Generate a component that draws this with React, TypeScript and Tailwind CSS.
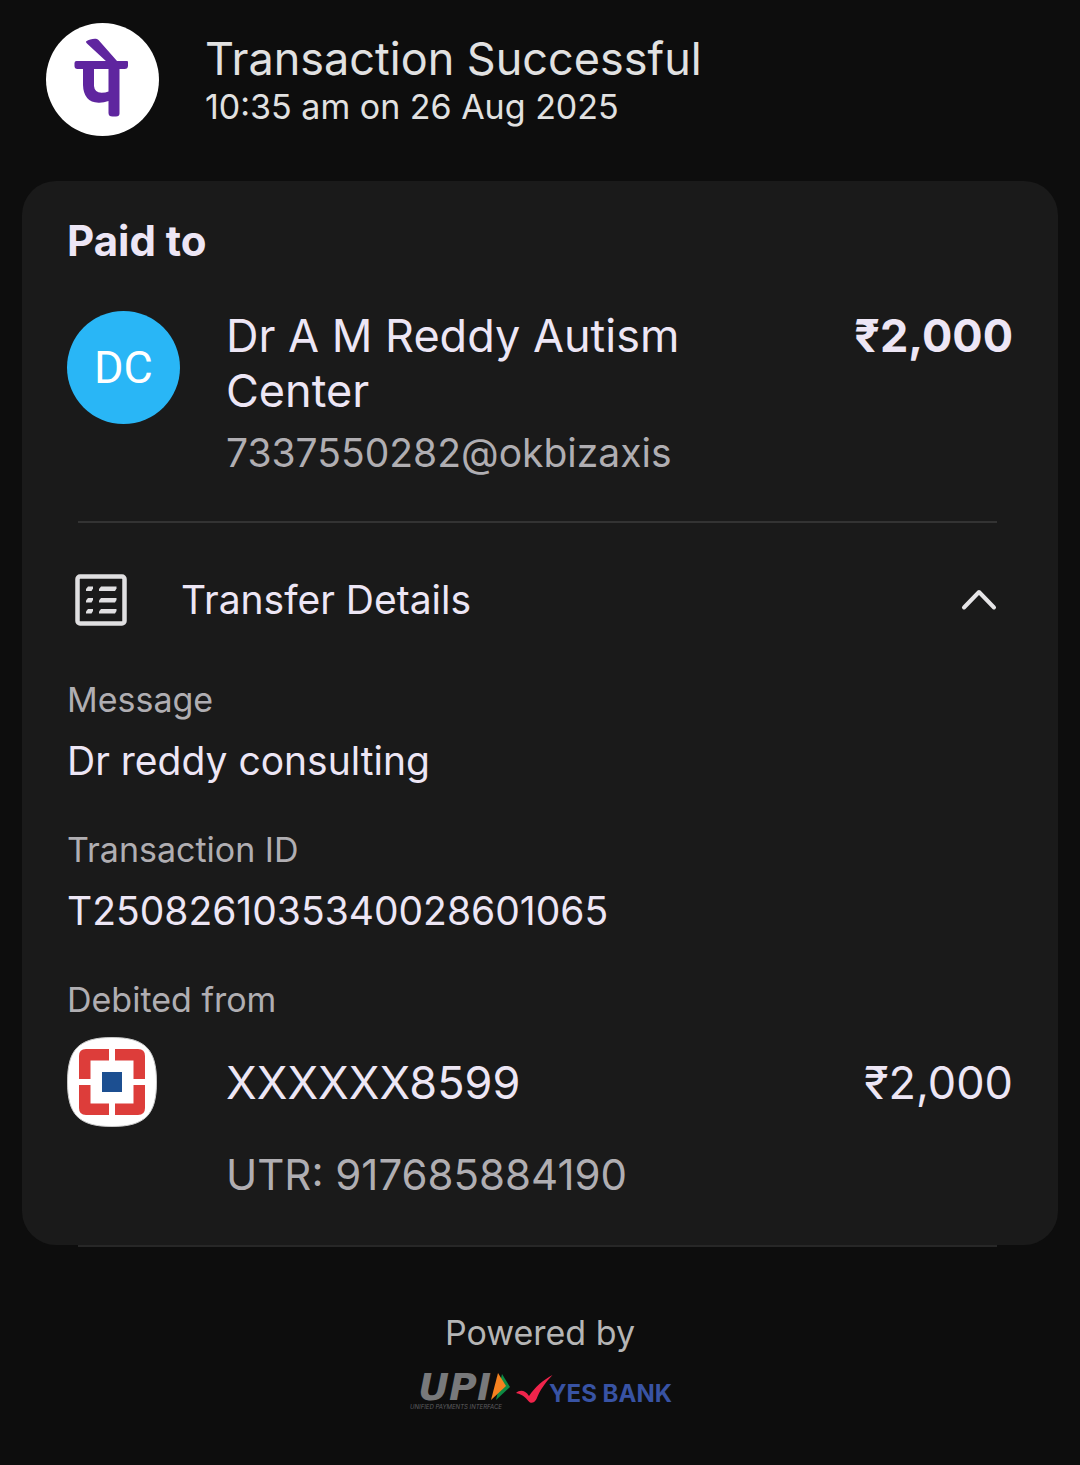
import { useState } from "react";

function PhonePeLogo() {
  return (
    <svg viewBox="0 0 113 113" className="size-[113px] shrink-0" role="img" aria-label="PhonePe">
      <circle cx="56.5" cy="56.5" r="56.5" fill="#ffffff" />
      <g fill="#5f259f">
        <path d="M40 18.5 C43 16.3 47 15.5 50 15.8 Q51.600 16 52.500 17 L71 38 L61.500 39.500 L41.500 21 Q39.800 19.600 40 18.500 Z" />
        <path d="M30.500 38 H81 Q82 38 82 39 V42.500 Q82 46 78.500 46 H73.500 V90.500 Q73.500 93.500 70 93.500 H66.500 Q62.500 93.500 62.500 90 V78 Q57.500 80 52.500 79.800 Q37.500 79 37 62 V46 H31.500 Q28.500 46 28.500 43 V40 Q28.500 38 30.500 38 Z M48 46 V63 Q48.500 69.500 55.500 69.800 Q59.500 69.800 62.500 68.500 V46 Z" fillRule="evenodd" />
      </g>
    </svg>
  );
}

function DetailsIcon() {
  return (
    <svg viewBox="0 0 52 52" className="size-[52px] shrink-0" aria-hidden="true">
      <rect x="2.500" y="2.500" width="47" height="47" rx="2.500" fill="none" stroke="#e0dfe1" strokeWidth="4.500" />
      <g fill="#e0dfe1">
        {[12.5, 24, 35].map((y) => (
          <g key={y} transform={`translate(0 ${y})`}>
            <path d="M13 0 H18 V2 L16.500 4.500 H11 V2.500 Z" />
            <path d="M26 0 H41.500 V2 L40 4.500 H24 V2.500 Z" />
          </g>
        ))}
      </g>
    </svg>
  );
}

function BankLogo() {
  return (
    <svg viewBox="0 0 90 90" className="size-[90px] shrink-0" role="img" aria-label="HDFC Bank">
      <path
        d="M45 0.500 C78 0.500 89.500 12 89.500 45 C89.500 78 78 89.500 45 89.500 C12 89.500 0.500 78 0.500 45 C0.500 12 12 0.500 45 0.500 Z"
        fill="#ffffff"
        stroke="#c9c9c9"
        strokeWidth="1"
      />
      <g fill="#dd3d3a">
        <path d="M42 12 H19 Q12 12 12 19 V42 H23.500 V23.500 H42 Z" />
        <path d="M48 12 H71 Q78 12 78 19 V42 H66.500 V23.500 H48 Z" />
        <path d="M42 78 H19 Q12 78 12 71 V48 H23.500 V66.500 H42 Z" />
        <path d="M48 78 H71 Q78 78 78 71 V48 H66.500 V66.500 H48 Z" />
      </g>
      <rect x="35" y="35" width="20" height="20" fill="#1c4f91" />
    </svg>
  );
}

function UpiLogo() {
  return (
    <div className="w-[102px]">
      <div className="flex h-7 items-center justify-end">
        <span className="font-['DejaVu_Sans',sans-serif] text-[38px] leading-7 font-bold text-[#78797b] italic">UPI</span>
        <svg viewBox="0 0 19 28" className="h-7 w-[19px] shrink-0" aria-hidden="true">
          <path d="M11 1 L19 14 L5 27 Z" fill="#0e8a43" />
          <path d="M7 0 L15 13 L0 27 Z" fill="#f58220" />
        </svg>
      </div>
      <p className="pl-0.5 text-[6px] leading-3 whitespace-nowrap text-[#5d5e60] italic">UNIFIED PAYMENTS INTERFACE</p>
    </div>
  );
}

function YesBankLogo() {
  return (
    <div className="flex items-start">
      <svg viewBox="0 0 37 32" className="h-8 w-[37px] shrink-0" aria-hidden="true">
        <path
          d="M0 20 C4 16.500 9 17 13 23 C19 14 27 7 36.500 2 C29 10 24 17 20.500 26 Q17.500 31 14 29.500 C10 26 8 21.500 0 20 Z"
          fill="#f0244b"
        />
      </svg>
      <span className="-ml-1 pt-[7px] text-[24px] leading-7 font-bold text-[#3853a4]">YES BANK</span>
    </div>
  );
}

function Field({ label, value }: { label: string; value: string }) {
  return (
    <div className="mb-[42px]">
      <dt className="text-[34px] leading-[44px] text-[#b0aeb2]">{label}</dt>
      <dd className="mt-3.5 break-words text-[39px] leading-[50px]">{value}</dd>
    </div>
  );
}

export default function App() {
  const [open, setOpen] = useState(true);

  return (
    <div className="min-h-screen bg-[#0d0d0d] px-[22px] pt-[23px] pb-14 font-['Inter',sans-serif] text-[#ede6f5]">
      <header className="flex items-center gap-[46px] pl-6 text-[#e1e1e1]">
        <PhonePeLogo />
        <div className="pt-0.5">
          <h1 className="text-[45px] leading-[52px]">Transaction Successful</h1>
          <p className="text-[34px] leading-[44px]">10:35 am on 26 Aug 2025</p>
        </div>
      </header>

      <main className="mt-[45px] rounded-[34px] bg-[#1a1a1a] px-[45px] pt-[35px] pb-[45px]">
        <h2 className="text-[42px] leading-[50px] font-bold">Paid to</h2>

        <section className="mt-[42px] flex items-start gap-[46px]">
          <div className="mt-[3px] flex size-[113px] shrink-0 items-center justify-center rounded-full bg-[#29b6f6] font-['Roboto',sans-serif] text-[45px] text-white">
            DC
          </div>
          <div className="min-w-0 flex-1">
            <p className="text-[45px] leading-[55px]">Dr A M Reddy Autism Center</p>
            <p className="mt-2.5 text-[39px] leading-[50px] text-[#b0aeb2]">7337550282@okbizaxis</p>
          </div>
          <p className="text-[45px] leading-[55px] font-bold">₹2,000</p>
        </section>

        <hr className="mt-[43px] mr-4 ml-[11px] border-t-2 border-[#333333]" />

        <button
          type="button"
          aria-expanded={open}
          onClick={() => setOpen(!open)}
          className="mt-[51px] flex w-full items-center pr-4 pl-2 text-left"
        >
          <DetailsIcon />
          <span className="ml-[54px] flex-1 text-[39px] leading-[50px]">Transfer Details</span>
          <svg viewBox="0 0 36 22" className={open ? "h-[22px] w-9" : "h-[22px] w-9 rotate-180"} aria-hidden="true">
            <path d="M3 18.500 L18 3 L33 18.500" fill="none" stroke="#e6e5e7" strokeWidth="4" strokeLinecap="round" strokeLinejoin="round" />
          </svg>
        </button>

        {open && (
          <section className="mt-[52px]">
            <dl>
              <Field label="Message" value="Dr reddy consulting" />
              <Field label="Transaction ID" value="T2508261035340028601065" />
            </dl>
            <h3 className="text-[34px] leading-[44px] text-[#b0aeb2]">Debited from</h3>
            <div className="mt-[15px] flex items-center text-[45px] leading-[55px]">
              <BankLogo />
              <p className="ml-[69px] flex-1">XXXXXX8599</p>
              <p>₹2,000</p>
            </div>
            <p className="mt-[23px] ml-[159px] text-[42px] leading-[50px] text-[#b0aeb2]">UTR: 917685884190</p>
          </section>
        )}
      </main>

      <hr className="mr-[61px] ml-14 border-t-2 border-[#272727]" />

      <footer className="mt-16 flex flex-col items-center">
        <p className="text-[34px] leading-[44px] text-[#b5b5b5]">Powered by</p>
        <div className="mt-[18px] flex items-start gap-1.5">
          <UpiLogo />
          <YesBankLogo />
        </div>
      </footer>
    </div>
  );
}
